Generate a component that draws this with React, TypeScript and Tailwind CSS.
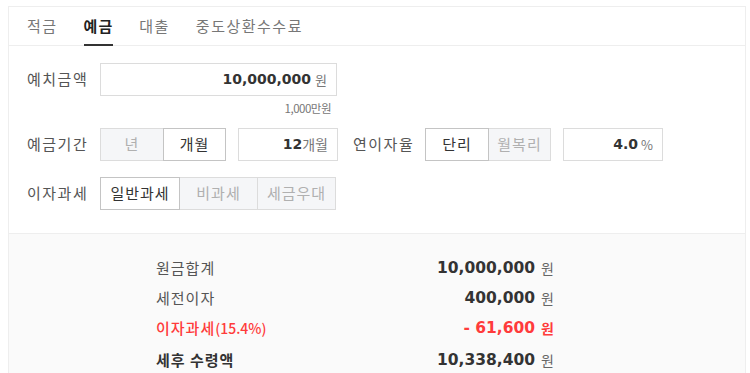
import React from "react";

const KR = { fontFamily: '"Noto Sans CJK KR", "Noto Sans", sans-serif' };
const NUM = { fontFamily: '"DejaVu Sans", "Noto Sans CJK KR", sans-serif' };

function Seg({ items, active, widths }: { items: string[]; active: number; widths: string[] }) {
  return (
    <div className="flex h-[33px]">
      {items.map((t, i) => (
        <div
          key={t}
          className={
            (i === active
              ? "bg-white text-[#333] border-[#c4c4c4] z-10 "
              : "bg-[#f5f6f8] text-[#b0b0b0] border-[#dcdcdc] ") +
            (i > 0 ? "-ml-px " : "") +
            widths[i] +
            " relative flex items-center justify-center border text-[15px] tracking-[1px]"
          }
        >
          {t}
        </div>
      ))}
    </div>
  );
}

export default function App() {
  return (
    <div className="w-[750px] h-[373px] overflow-hidden bg-white pt-[6px] pl-[8px] pr-[4px]" style={KR}>
      <div className="border border-[#eeeeee] border-b-0 h-[400px]">
        {/* tabs */}
        <div className="flex h-[39px] items-center gap-[26px] border-b border-[#eeeeee] pl-[18px] text-[15px] tracking-[1.5px] text-[#777]">
          <div>적금</div>
          <div className="relative h-full flex items-center font-bold text-[#222] tracking-[1px]">
            예금
            <div className="absolute left-0 right-0 -bottom-px h-[2px] bg-[#333]" />
          </div>
          <div>대출</div>
          <div>중도상환수수료</div>
        </div>

        {/* form */}
        <div className="pl-[18px] pt-[17px] pb-[23px] border-b border-[#eeeeee]">
          <div className="flex items-center">
            <div className="w-[73px] text-[15px] tracking-[1.5px] text-[#555]">예치금액</div>
            <div className="w-[237px] h-[33px] border border-[#dcdcdc] flex items-center justify-end pr-[9px] gap-[4px]">
              <span className="font-bold text-[14px] text-[#333]" style={NUM}>10,000,000</span>
              <span className="text-[13px] text-[#777]">원</span>
            </div>
          </div>
          <div className="w-[304px] text-right text-[11.5px] text-[#777] h-[32px] pt-[4px] tracking-[-0.5px]">1,000만원</div>
          <div className="flex items-center">
            <div className="w-[73px] text-[15px] tracking-[1.5px] text-[#555]">예금기간</div>
            <Seg items={["년", "개월"]} active={1} widths={["w-[64px]", "w-[63px]"]} />
            <div className="ml-[12px] w-[100px] h-[33px] border border-[#dcdcdc] flex items-center justify-end pr-[9px]">
              <span className="font-bold text-[14px] text-[#333]" style={NUM}>12</span>
              <span className="text-[14px] text-[#777]">개월</span>
            </div>
            <div className="ml-[15px] w-[72px] text-[15px] tracking-[1.5px] text-[#555]">연이자율</div>
            <Seg items={["단리", "월복리"]} active={0} widths={["w-[64px]", "w-[63px]"]} />
            <div className="ml-[12px] w-[100px] h-[33px] border border-[#dcdcdc] flex items-center justify-end pr-[9px] gap-[3px]">
              <span className="font-bold text-[14px] text-[#333]" style={NUM}>4.0</span>
              <span className="text-[13px] text-[#777]">%</span>
            </div>
          </div>
          <div className="flex items-center mt-[16px]">
            <div className="w-[73px] text-[15px] tracking-[1.5px] text-[#555]">이자과세</div>
            <Seg items={["일반과세", "비과세", "세금우대"]} active={0} widths={["w-[80px]", "w-[79px]", "w-[79px]"]} />
          </div>
        </div>

        {/* results */}
        <div className="bg-[#fafafa] h-full pt-[19px] pl-[147px]">
          <div className="w-[398px] text-[15px] leading-[30px]">
            <div className="flex justify-between">
              <span className="text-[#555] tracking-[1px]">원금합계</span>
              <span className="flex items-center gap-[6px]">
                <span className="font-bold text-[15.5px] text-[#333]" style={NUM}>10,000,000</span>
                <span className="text-[14px] text-[#666]">원</span>
              </span>
            </div>
            <div className="flex justify-between">
              <span className="text-[#555] tracking-[1px]">세전이자</span>
              <span className="flex items-center gap-[6px]">
                <span className="font-bold text-[15.5px] text-[#333]" style={NUM}>400,000</span>
                <span className="text-[14px] text-[#666]">원</span>
              </span>
            </div>
            <div className="flex justify-between text-[#ff3b3b]">
              <span className="tracking-[1px] font-medium">이자과세<span className="text-[14px] tracking-normal">(15.4%)</span></span>
              <span className="flex items-center gap-[6px]">
                <span className="font-bold text-[15.5px]" style={NUM}>- 61,600</span>
                <span className="text-[14px] font-bold">원</span>
              </span>
            </div>
            <div className="flex justify-between pt-[2px]">
              <span className="font-bold text-[#333] tracking-[1px]">세후 수령액</span>
              <span className="flex items-center gap-[6px]">
                <span className="font-bold text-[15.5px] text-[#333]" style={NUM}>10,338,400</span>
                <span className="text-[14px] text-[#666]">원</span>
              </span>
            </div>
          </div>
        </div>
      </div>
    </div>
  );
}
